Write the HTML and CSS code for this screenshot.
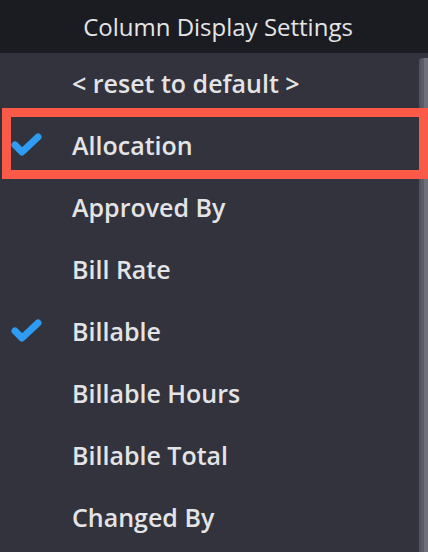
FILE: index.html
```html
<!DOCTYPE html>
<html lang="en">
<head>
    <meta charset="UTF-8">
    <meta name="viewport" content="width=device-width, initial-scale=1.0">
    <title>Column Display Settings</title>
    <link rel="stylesheet" href="styles.css">
</head>
<body>
<div class="panel">
    <div class="panel-title">Column Display Settings</div>
    <div class="panel-body">
        <ul class="column-list">
            <li class="column-item"><span class="check"></span><span class="label">&lt; reset to default &gt;</span></li>
            <li class="column-item"><span class="check"><svg viewBox="0 0 32 26"><path d="M5 14 L12 21 L28 6"/></svg></span><span class="label">Allocation</span></li>
            <li class="column-item"><span class="check"></span><span class="label">Approved By</span></li>
            <li class="column-item"><span class="check"></span><span class="label">Bill Rate</span></li>
            <li class="column-item"><span class="check"><svg viewBox="0 0 32 26"><path d="M5 14 L12 21 L28 6"/></svg></span><span class="label">Billable</span></li>
            <li class="column-item"><span class="check"></span><span class="label">Billable Hours</span></li>
            <li class="column-item"><span class="check"></span><span class="label">Billable Total</span></li>
            <li class="column-item"><span class="check"></span><span class="label">Changed By</span></li>
        </ul>
        <div class="scrollbar"></div>
    </div>
    <!-- annotation box round the selected row -->
    <div class="highlight-box"></div>
</div>
</body>
</html>
```

FILE: styles.css
```css
body {
    margin: 0;
    background-color: #32333c;
    font-family: "Open Sans", "Noto Sans", Arial, sans-serif;
    color: #e4e4e6;
    overflow: hidden;
}

.panel {
    position: relative;
    width: 428px;
    height: 552px;
}

.panel-title {
    height: 53px;
    background-color: #1b1c21;
    display: flex;
    align-items: center;
    justify-content: center;
    font-size: 24px;
    padding-left: 8px;
    box-sizing: border-box;
}

.panel-body {
    display: flex;
}

.column-list {
    list-style: none;
    margin: 0;
    padding: 0;
    flex: 1;
}

.column-item {
    height: 62px;
    display: flex;
    align-items: center;
    font-size: 25px;
    font-weight: 600;
}

.label {
    margin-top: -2px;
}

.check {
    width: 32px;
    height: 26px;
    margin-left: 10px;
    margin-right: 30px;
    margin-top: -4px;
}

.check svg {
    width: 32px;
    height: 26px;
    display: block;
}

.check path {
    fill: none;
    stroke: #2f9cf3;
    stroke-width: 7;
    stroke-linecap: round;
    stroke-linejoin: round;
}

.scrollbar {
    width: 9px;
    margin-top: 5px;
    height: 494px;
    background-color: #5b5c68;
    border-radius: 4px 0 0 0;
    box-shadow: inset 2px 0 0 #52535e, inset -4px 0 0 #6e6f7b;
}

.highlight-box {
    position: absolute;
    left: 2px;
    top: 108px;
    width: 426px;
    height: 71px;
    border: 9px solid #fb5a49;
    box-sizing: border-box;
}
```
